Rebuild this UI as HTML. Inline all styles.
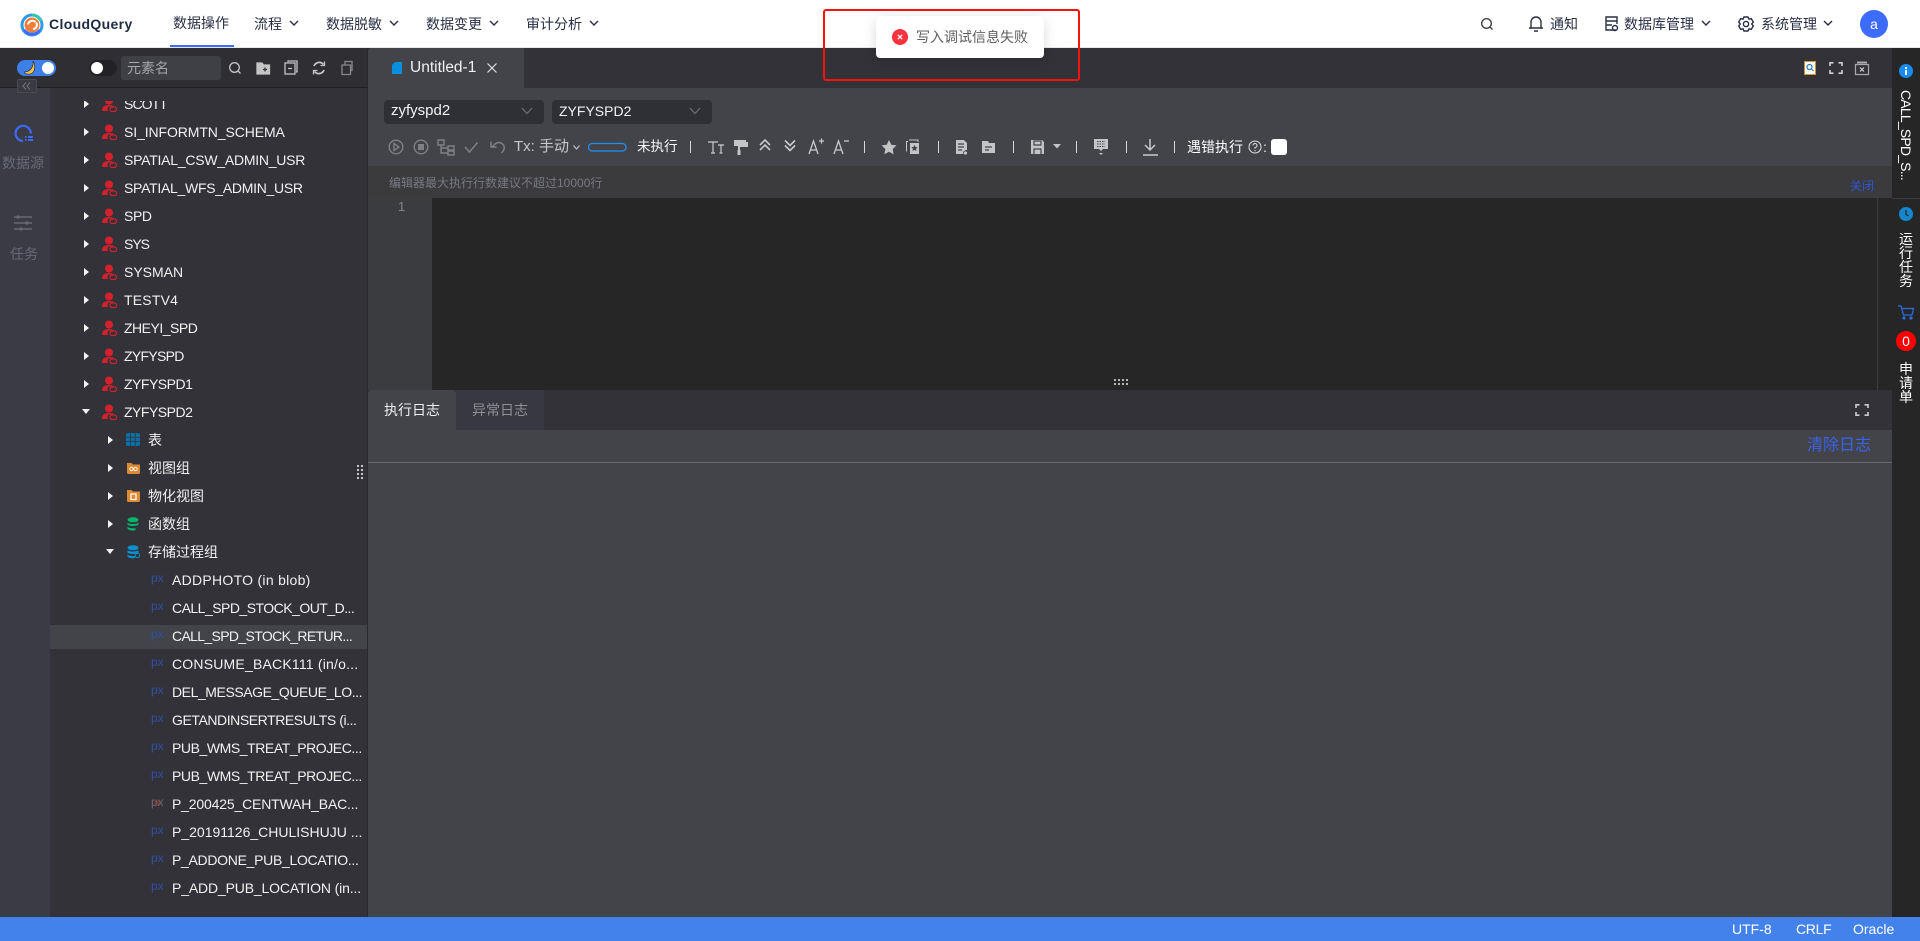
<!DOCTYPE html>
<html lang="zh">
<head>
<meta charset="utf-8">
<title>CloudQuery</title>
<style>
*{box-sizing:border-box}
html,body{margin:0;padding:0;width:1920px;height:941px;overflow:hidden;background:#323238;font-family:"Liberation Sans","Noto Sans CJK SC",sans-serif;}
.a{position:absolute}
.t{position:absolute;white-space:nowrap;line-height:20px;font-size:14px}
svg{position:absolute;overflow:visible}
.nav{color:#2a2f45;top:14px}
.r{position:absolute;white-space:nowrap;font-size:14px;line-height:20px;color:#f2f2f2}
.tri{position:absolute;width:0;height:0;border-top:4px solid transparent;border-bottom:4px solid transparent;border-left:5px solid #f2f2f2}
.trid{position:absolute;width:0;height:0;border-left:4.5px solid transparent;border-right:4.5px solid transparent;border-top:5px solid #f2f2f2}
.px{position:absolute;font-size:12px;line-height:14px;color:#2f50a8;letter-spacing:0}
.sep{position:absolute;top:141px;width:1px;height:12px;background:#d8d8d8}
.ti{fill:none;stroke:#7f8086;stroke-width:1.4}
.tw{fill:none;stroke:#c9c9cb;stroke-width:1.5}
.tf{fill:#c4c4c6}
</style>
</head>
<body>
<!-- header -->
<div class="a" style="left:0;top:0;width:1920px;height:48px;background:#fff;border-bottom:1px solid #e8e8e8"></div>
<svg style="left:21px;top:13px" width="22" height="24" viewBox="0 0 22 24">
<circle cx="11" cy="12" r="10" fill="none" stroke="#2d9be8" stroke-width="3"/>
<path d="M3 17A10 10 0 0 0 19 17" fill="none" stroke="#3d6bff" stroke-width="3"/>
<path d="M11 2A10 10 0 0 1 20 8" fill="none" stroke="#35c5b0" stroke-width="3"/>
<circle cx="11" cy="12" r="7.5" fill="#ee7d3a"/>
<path d="M7 11.5a4.5 4.5 0 0 1 7.5-2.5M15 9.5a4 4 0 0 1-3 6.5" fill="none" stroke="#fff" stroke-width="2"/>
</svg>
<div class="t" style="left:49px;top:14px;font-size:14px;font-weight:700;color:#1f2a44;letter-spacing:.35px">CloudQuery</div>
<div class="t nav" style="left:173px;top:12.500px;">数据操作</div>
<div class="a" style="left:170px;top:45px;width:64px;height:2px;background:#3d6bff"></div>
<div class="t nav" style="left:254px">流程</div>
<div class="t nav" style="left:326px">数据脱敏</div>
<div class="t nav" style="left:426px">数据变更</div>
<div class="t nav" style="left:526px">审计分析</div>
<svg style="left:0;top:0" width="1920" height="48" fill="none" stroke="#2a2f45" stroke-width="1.4">
<path d="M290 21l4 4 4-4M390 21l4 4 4-4M490 21l4 4 4-4M590 21l4 4 4-4M1702 21l4 4 4-4M1824 21l4 4 4-4"/>
<circle cx="1486.5" cy="23.5" r="4.8" stroke="#444"/><path d="M1490 27l2.5 2.5" stroke="#444"/>
<path d="M1531 28v-6a5 5 0 0 1 10 0v6zM1529 28h14M1534 31h4"/>
<path d="M1616 30h-10v-13h11v7M1606 21h11M1606 25h6"/><circle cx="1615" cy="28" r="2.5"/>
<path d="M1744 17h4l1 2.2 2.3-.5 2 3.4-1.6 1.9 1.6 1.9-2 3.4-2.3-.5-1 2.2h-4l-1-2.2-2.3.5-2-3.4 1.6-1.9-1.6-1.9 2-3.4 2.3.5z"/><circle cx="1746" cy="24" r="2.6"/>
</svg>
<div class="t nav" style="left:1550px">通知</div>
<div class="t nav" style="left:1624px">数据库管理</div>
<div class="t nav" style="left:1761px">系统管理</div>
<div class="a" style="left:1860px;top:10px;width:28px;height:28px;border-radius:50%;background:#3d6bff;color:#fff;font-size:14px;line-height:28px;text-align:center">a</div>

<!-- left columns -->
<div class="a" style="left:0;top:87px;width:50px;height:830px;background:#3a3b45"></div>
<div class="a" style="left:50px;top:87px;width:318px;height:830px;background:#323238"></div>
<div class="a" style="left:0;top:48px;width:368px;height:40px;background:#2e2e33;border-bottom:1px solid #1f1f22"></div>
<div class="a" style="left:367px;top:48px;width:1px;height:869px;background:#2a2a2e"></div>
<div class="a" style="left:17px;top:60px;width:39px;height:16px;border-radius:8px;background:#3f7fe8"></div>
<svg style="left:22px;top:60px" width="16" height="16" viewBox="0 0 16 16"><path d="M11 1C12 7 8 12 2 12c2 3 8 3 10-1 1-3 1-7-1-10z" fill="#f4c24a" stroke="#222" stroke-width=".6"/></svg>
<div class="a" style="left:42px;top:62px;width:12px;height:12px;border-radius:50%;background:#fff"></div>
<div class="a" style="left:17px;top:79px;width:20px;height:14px;border:1px solid #4a4b52;background:#3a3b42;border-radius:2px"></div>
<svg style="left:21px;top:82px" width="12" height="8" fill="none" stroke="#70717a" stroke-width="1"><path d="M5 0.5L2 4l3 3.5M9 .5L6 4l3 3.5"/></svg>
<div class="a" style="left:89px;top:60px;width:28px;height:16px;border-radius:8px;background:#222226"></div>
<div class="a" style="left:91px;top:62px;width:12px;height:12px;border-radius:50%;background:#fff"></div>
<div class="a" style="left:121px;top:56px;width:100px;height:24px;border-radius:3px;background:#3f4046"></div>
<div class="t" style="left:127px;top:58px;color:#a5a6ab">元素名</div>
<svg style="left:0;top:48px" width="368" height="40" fill="none" stroke="#c4c4c6" stroke-width="1.3">
<circle cx="234.5" cy="19.5" r="4.8"/><path d="M238 23l2.5 2.5"/>
<path d="M257 15h5l1.5 2h6v9h-12.500z" fill="#c4c4c6"/><path d="M263 21.500h4M265 19.500v4" stroke="#333"/>
<rect x="285" y="15" width="10" height="11"/><path d="M288 14v-1h9v11h-1M288 20.500h4"/>
<path d="M314 18a5.500 5.500 0 0 1 9.500-1.500M324 22a5.500 5.500 0 0 1-9.500 1.500" stroke-width="1.800"/><path d="M324.500 13.500v4h-4M313.500 26.500v-4h4" stroke-width="1.300"/>
<rect x="342" y="17" width="8.500" height="9.500" stroke="#888"/><path d="M345 17v-3.500h7v9h-2" stroke="#888"/>
</svg>

<!-- left nav -->
<svg style="left:14px;top:124px" width="20" height="20" viewBox="0 0 20 20" fill="none" stroke="#3d6bff" stroke-width="2.200">
<path d="M9 17A7.600 7.600 0 1 1 16.800 9.500"/><path d="M11 13h1.500M14 13h5M11 16h1.500M14 16h5" stroke-width="2"/>
</svg>
<div class="t" style="left:2px;top:153px;color:#686a78">数据源</div>
<svg style="left:13px;top:215px" width="20" height="16" fill="none" stroke="#676974" stroke-width="1.600"><path d="M1 2h18M1 8h18M1 14h18"/><path d="M5 .5v3M14 6.500v3M8 12.500v3" stroke-width="2.600"/></svg>
<div class="t" style="left:10px;top:244px;color:#686a78">任务</div>

<!-- tree -->
<div class="a" style="left:50px;top:101px;width:317px;height:816px;overflow:hidden">
<div class="a" style="left:-50px;top:-102px;width:368px;height:941px">
<div class="a" style="left:50px;top:626px;width:318px;height:24px;background:#434449"></div>

<div class="tri" style="left:84px;top:101px"></div><svg style="left:101px;top:97px" width="16" height="16"><use href="#u"/></svg><div class="r" style="left:124px;top:95px;letter-spacing:-.9px">SCOTT</div>
<div class="tri" style="left:84px;top:129px"></div><svg style="left:101px;top:125px" width="16" height="16"><use href="#u"/></svg><div class="r" style="left:124px;top:123px;letter-spacing:-.1px">SI_INFORMTN_SCHEMA</div>
<div class="tri" style="left:84px;top:157px"></div><svg style="left:101px;top:153px" width="16" height="16"><use href="#u"/></svg><div class="r" style="left:124px;top:151px;letter-spacing:-.24px">SPATIAL_CSW_ADMIN_USR</div>
<div class="tri" style="left:84px;top:185px"></div><svg style="left:101px;top:181px" width="16" height="16"><use href="#u"/></svg><div class="r" style="left:124px;top:179px;letter-spacing:-.28px">SPATIAL_WFS_ADMIN_USR</div>
<div class="tri" style="left:84px;top:213px"></div><svg style="left:101px;top:209px" width="16" height="16"><use href="#u"/></svg><div class="r" style="left:124px;top:207px;letter-spacing:-.4px">SPD</div>
<div class="tri" style="left:84px;top:241px"></div><svg style="left:101px;top:237px" width="16" height="16"><use href="#u"/></svg><div class="r" style="left:124px;top:235px;letter-spacing:-1px">SYS</div>
<div class="tri" style="left:84px;top:269px"></div><svg style="left:101px;top:265px" width="16" height="16"><use href="#u"/></svg><div class="r" style="left:124px;top:263px">SYSMAN</div>
<div class="tri" style="left:84px;top:297px"></div><svg style="left:101px;top:293px" width="16" height="16"><use href="#u"/></svg><div class="r" style="left:124px;top:291px;letter-spacing:.2px">TESTV4</div>
<div class="tri" style="left:84px;top:325px"></div><svg style="left:101px;top:321px" width="16" height="16"><use href="#u"/></svg><div class="r" style="left:124px;top:319px;letter-spacing:-.5px">ZHEYI_SPD</div>
<div class="tri" style="left:84px;top:353px"></div><svg style="left:101px;top:349px" width="16" height="16"><use href="#u"/></svg><div class="r" style="left:124px;top:347px;letter-spacing:-.7px">ZYFYSPD</div>
<div class="tri" style="left:84px;top:381px"></div><svg style="left:101px;top:377px" width="16" height="16"><use href="#u"/></svg><div class="r" style="left:124px;top:375px;letter-spacing:-.5px">ZYFYSPD1</div>
<div class="trid" style="left:81.500px;top:410px"></div><svg style="left:101px;top:405px" width="16" height="16"><use href="#u"/></svg><div class="r" style="left:124px;top:403px;letter-spacing:-.5px">ZYFYSPD2</div>

<div class="tri" style="left:108px;top:437px"></div>
<svg style="left:126px;top:434px" width="14" height="14"><rect width="14" height="13" rx="2" fill="#0b6fa8"/><path d="M0 4.300h14M0 8.600h14M4.600 0v13M9.300 0v13" stroke="#33353b" stroke-width=".8"/></svg>
<div class="r" style="left:148px;top:431px">表</div>
<div class="tri" style="left:108px;top:465px"></div>
<svg style="left:127px;top:462px" width="13" height="13"><path d="M0 2h4.500l1.500 1.500h7v8a1.500 1.500 0 0 1-1.500 1.500h-10A1.500 1.500 0 0 1 0 11.500z" fill="#de8a34"/><circle cx="4.500" cy="8" r="1.700" fill="none" stroke="#fff" stroke-width=".9"/><circle cx="8.500" cy="8" r="1.700" fill="none" stroke="#fff" stroke-width=".9"/></svg>
<div class="r" style="left:148px;top:459px">视图组</div>
<div class="tri" style="left:108px;top:493px"></div>
<svg style="left:127px;top:490px" width="13" height="13"><path d="M0 1h4.500l1.500 1.500h7v9a1.500 1.500 0 0 1-1.500 1.500h-10A1.500 1.500 0 0 1 0 11.500z" fill="#de8a34"/><rect x="4" y="5" width="5" height="5.500" fill="none" stroke="#fff" stroke-width="1.200"/></svg>
<div class="r" style="left:148px;top:487px">物化视图</div>
<div class="tri" style="left:108px;top:521px"></div>
<svg style="left:127px;top:518px" width="12" height="14"><ellipse cx="6" cy="2.800" rx="5.500" ry="2.500" fill="#06b36a"/><path d="M.5 5.500c1 2 10 2 11 0v2c-1 2-10 2-11 0zM.5 9.500c1 2 7 2 8 1.500v2c-2 1-7 .5-8-1.500z" fill="#06b36a"/></svg>
<div class="r" style="left:148px;top:515px">函数组</div>
<div class="trid" style="left:105.500px;top:550px"></div>
<svg style="left:127px;top:546px" width="13" height="14"><ellipse cx="6" cy="2.800" rx="5.500" ry="2.500" fill="#0c8fd0"/><path d="M.5 5c1 2 10 2 11 0v2.500c-1 2-10 2-11 0zM.5 9.300c1 2 6 2 7.500 1.500v2.200c-2 .5-6.500.2-7.500-1.500z" fill="#0c8fd0"/><circle cx="10.500" cy="10.500" r="2.200" fill="none" stroke="#0c8fd0" stroke-width="1"/></svg>
<div class="r" style="left:148px;top:543px">存储过程组</div>

<div class="px" style="left:151px;top:572px">px</div><div class="r" style="left:172px;top:571px;letter-spacing:.28px">ADDPHOTO (in blob)</div>
<div class="px" style="left:151px;top:600px">px</div><div class="r" style="left:172px;top:599px;letter-spacing:-.52px">CALL_SPD_STOCK_OUT_D...</div>
<div class="px" style="left:151px;top:628px">px</div><div class="r" style="left:172px;top:627px;letter-spacing:-.65px">CALL_SPD_STOCK_RETUR...</div>
<div class="px" style="left:151px;top:656px">px</div><div class="r" style="left:172px;top:655px;letter-spacing:.2px">CONSUME_BACK111 (in/o...</div>
<div class="px" style="left:151px;top:684px">px</div><div class="r" style="left:172px;top:683px;letter-spacing:-.43px">DEL_MESSAGE_QUEUE_LO...</div>
<div class="px" style="left:151px;top:712px">px</div><div class="r" style="left:172px;top:711px;letter-spacing:-.43px">GETANDINSERTRESULTS (i...</div>
<div class="px" style="left:151px;top:740px">px</div><div class="r" style="left:172px;top:739px;letter-spacing:-.43px">PUB_WMS_TREAT_PROJEC...</div>
<div class="px" style="left:151px;top:768px">px</div><div class="r" style="left:172px;top:767px;letter-spacing:-.43px">PUB_WMS_TREAT_PROJEC...</div>
<div class="px" style="left:151px;top:796px;color:#6a6a6e">px</div><svg style="left:152px;top:799px" width="10" height="10" fill="none" stroke="#a03a3a" stroke-width=".7"><circle cx="5" cy="5" r="2.200"/><path d="M3.500 3.500l3 3M6.500 3.500l-3 3"/></svg><div class="r" style="left:172px;top:795px;letter-spacing:-.17px">P_200425_CENTWAH_BAC...</div>
<div class="px" style="left:151px;top:824px">px</div><div class="r" style="left:172px;top:823px">P_20191126_CHULISHUJU ...</div>
<div class="px" style="left:151px;top:852px">px</div><div class="r" style="left:172px;top:851px;letter-spacing:-.3px">P_ADDONE_PUB_LOCATIO...</div>
<div class="px" style="left:151px;top:880px">px</div><div class="r" style="left:172px;top:879px;letter-spacing:-.15px">P_ADD_PUB_LOCATION (in...</div>
</div>
</div>
<svg style="left:0;top:0" width="0" height="0"><defs><g id="u"><circle cx="8" cy="4.500" r="4" fill="#d3212d"/><path d="M1 15c0-4 2-6 7-6 3 0 4 .5 5 1.500H9.500A2.500 2.500 0 0 0 7.500 15z" fill="#d3212d"/><rect x="9" y="11" width="6.500" height="4.500" rx="2" fill="none" stroke="#d3212d" stroke-width="1.200"/></g></defs></svg>
<svg style="left:357px;top:465px" width="8" height="14" fill="#c8c8c8"><rect x="0" y="0" width="2" height="2"/><rect x="4" y="0" width="2" height="2"/><rect x="0" y="4" width="2" height="2"/><rect x="4" y="4" width="2" height="2"/><rect x="0" y="8" width="2" height="2"/><rect x="4" y="8" width="2" height="2"/><rect x="0" y="12" width="2" height="2"/><rect x="4" y="12" width="2" height="2"/></svg>

<!-- main: tab bar -->
<div class="a" style="left:368px;top:48px;width:1524px;height:40px;background:#323238"></div>
<div class="a" style="left:368px;top:48px;width:156px;height:40px;background:#43444a;border-top-left-radius:4px"></div>
<svg style="left:392px;top:62px" width="10" height="12"><path d="M3 0h7v12H0V3z" fill="#0a8ee0"/></svg>
<div class="t" style="left:410px;top:58px;color:#f0f0f0;font-size:15.500px">Untitled-1</div>
<svg style="left:487px;top:63px" width="10" height="10" stroke="#e0e0e0" stroke-width="1.200"><path d="M.5.500l9 9M9.500.500l-9 9"/></svg>
<svg style="left:1804px;top:61px" width="12" height="14"><path d="M.5.500h11v13H.500z" fill="#f8f8f8" stroke="#d0942c"/><circle cx="5.500" cy="6" r="2.500" fill="none" stroke="#2d7fb8" stroke-width="1.200"/><path d="M7.500 8l2 2" stroke="#2d7fb8"/></svg>
<svg style="left:1830px;top:62px" width="12" height="12" fill="none" stroke="#cfcfd1" stroke-width="1.600"><path d="M0 4V.8h3.500M8.500.8H12V4M12 8v3.200H8.500M3.500 11.200H0V8"/></svg>
<svg style="left:1855px;top:61px" width="14" height="14" fill="none" stroke="#a9a9ac" stroke-width="1.200"><path d="M.5 3.500h13v10H.5z"/><path d="M2 1.500h10" stroke-width="2"/><path d="M5 6.500l4 4M9 6.500l-4 4" stroke="#d0d0d0"/></svg>

<!-- toolbar region -->
<div class="a" style="left:368px;top:88px;width:1524px;height:78px;background:#43444a"></div>
<div class="a" style="left:384px;top:100px;width:160px;height:24px;border-radius:4px;background:#2f3036"></div>
<div class="a" style="left:552px;top:100px;width:160px;height:24px;border-radius:4px;background:#2f3036"></div>
<div class="t" style="left:391px;top:101px;color:#f2f2f2;font-size:15px">zyfyspd2</div>
<div class="t" style="left:559px;top:101px;color:#f2f2f2;font-size:14px">ZYFYSPD2</div>
<svg style="left:0;top:0" width="1300" height="170" fill="none" stroke="#6f7076" stroke-width="1.200">
<path d="M522 108l5 5.500 5-5.500M690 108l5 5.500 5-5.500"/>
<g class="ti"><circle cx="396" cy="147" r="6.800"/><path d="M394 143.500l5 3.500-5 3.500z"/><circle cx="421" cy="147" r="6.800"/><rect x="418" y="144" width="6" height="6" fill="#7f8086" stroke="none"/>
<path d="M438 140h6v5h-6zM448 146h6v4h-6zM448 151h6v4h-6zM441 145v8h7M441 148h7"/>
<path d="M465 147l4.500 5 8-9.500" stroke-width="1.500"/>
<path d="M501.500 153c3-3 4-6 1-9-2-2-5-2-7.500 0l-3 3M491 141.500v5.500h5.500" stroke-width="1.500"/></g>
<path d="M573.500 145.500l3 3.500 3-3.500" stroke="#c0c0c2"/>
<rect x="588.500" y="143.500" width="37.500" height="7.500" rx="3.700" stroke="#1f8ff0" stroke-width="1.300"/>
<g class="tw">
<path d="M708 142h10M713 142v11M711 153h4M718 145h6M721 145v8M719.500 153h3" stroke-width="1.200"/>
<path d="M760 145l5-5 5 5M760 150l5-5 5 5M785 140.500l5 5 5-5M785 145.500l5 5 5-5" stroke-width="1.600"/>
<path d="M809 154l4.500-13 4.500 13M810.500 150h6M819 141h5M821.500 138.500v5M834 154l4.500-13 4.500 13M835.500 150h6M844 141h5" stroke-width="1.300"/>
<path d="M1150 139v10M1145 145l5 5 5-5M1143 155h15" stroke-width="1.500"/>
</g>
<g stroke="none" class="tf">
<path d="M734 140h12v6h-12zM746 142h2v5h-8v3h-2v-5h8zM737.500 150h3v5h-3z"/>
<path d="M889 140l2.300 4.700 5.200.7-3.800 3.600.9 5.200-4.600-2.500-4.600 2.500.9-5.200-3.800-3.600 5.200-.7z"/>
<path d="M956 140h8l3 3v7a3 3 0 0 0-3 4h-8z"/>
<path d="M982 141h6l1 2h6v10h-13z"/>
<path d="M1031 140h11l2 2v12h-13z"/>
<path d="M1053 144h8l-4 4.500z"/>
<path d="M1094 139h14v10h-5l-2 2-2-2h-5z"/>
<path d="M1099 153h4l-2 2z"/>
</g>
<g fill="none" stroke="#c4c4c6">
<path d="M908 141.500h-1.500v10M909 140h9v2" stroke-width="1"/>
</g>
<rect x="910" y="143" width="9" height="11" fill="#c4c4c6" stroke="none"/><path d="M914.500 145l1.100 2 2.100.3-1.600 1.500.4 2.200-2-1.100-2 1.100.4-2.200-1.600-1.500 2.100-.3z" fill="#43444a" stroke="none"/>
<path d="M958 144h6M958 147h6M958 150h4" stroke="#43444a"/><circle cx="965.500" cy="153" r="2" fill="#c4c4c6" stroke="#43444a" stroke-width=".8"/>
<path d="M985 147h7M985 150h4" stroke="#43444a" stroke-width="1.300"/>
<path d="M1034 141h7v4h-7zM1034 154v-5h7v5" stroke="#43444a" stroke-width="1.200"/>
<path d="M1097 141.500h8M1097 144h8M1097 146.500h8" stroke="#43444a" stroke-width="1" stroke-dasharray="1.500 1"/>
</svg>
<div class="t" style="left:514px;top:137px;color:#c6c7ca;font-size:15px">Tx: 手动</div>
<div class="t" style="left:637px;top:137px;color:#f6f6f6;font-size:13.500px">未执行</div>
<div class="sep" style="left:690px"></div><div class="sep" style="left:864px"></div><div class="sep" style="left:938px"></div><div class="sep" style="left:1013px"></div><div class="sep" style="left:1076px"></div><div class="sep" style="left:1126px"></div><div class="sep" style="left:1174px"></div>
<div class="t" style="left:1187px;top:137px;color:#fff;font-size:14px">遇错执行</div>
<svg style="left:1248px;top:140px" width="14" height="14" fill="none" stroke="#e0e0e0" stroke-width="1"><circle cx="7" cy="7" r="6"/><path d="M5 5.500a2 2 0 1 1 2 2v1.200M7 10v1.200"/></svg>
<div class="t" style="left:1263px;top:137px;color:#f0f0f0">:</div>
<div class="a" style="left:1271px;top:139px;width:16px;height:16px;border-radius:3px;background:#fff"></div>

<!-- hint bar -->
<div class="a" style="left:368px;top:166px;width:1524px;height:32px;background:#3b3b3d"></div>
<div class="t" style="left:389px;top:173px;font-size:12px;color:#777983">编辑器最大执行行数建议不超过10000行</div>
<div class="t" style="left:1850px;top:176px;font-size:12px;color:#2f55d4">关闭</div>

<!-- editor -->
<div class="a" style="left:368px;top:198px;width:64px;height:192px;background:#3b3c40"></div>
<div class="a" style="left:432px;top:198px;width:1445px;height:192px;background:#262626"></div>
<div class="a" style="left:1877px;top:198px;width:1px;height:192px;background:#3e3e40"></div>
<div class="a" style="left:1878px;top:198px;width:14px;height:192px;background:#262626"></div>
<div class="t" style="left:398px;top:197px;font-size:13px;color:#85868a">1</div>
<svg style="left:1114px;top:379px" width="16" height="8" fill="#b8b8ba"><path d="M0 0h2v2H0zM4 0h2v2H4zM8 0h2v2H8zM12 0h2v2h-2zM0 4h2v2H0zM4 4h2v2H4zM8 4h2v2H8zM12 4h2v2h-2z"/></svg>

<!-- log panel -->
<div class="a" style="left:368px;top:390px;width:1524px;height:40px;background:#323238"></div>
<div class="a" style="left:368px;top:390px;width:88px;height:40px;background:#43444a;border-top-left-radius:4px;border-top-right-radius:4px"></div>
<div class="a" style="left:456px;top:390px;width:88px;height:40px;background:#383842"></div>
<div class="t" style="left:384px;top:400px;color:#f0f0f0">执行日志</div>
<div class="t" style="left:472px;top:400px;color:#8f9095">异常日志</div>
<svg style="left:1856px;top:404px" width="12" height="12" fill="none" stroke="#cfcfd1" stroke-width="1.600"><path d="M0 4V.8h3.500M8.500.8H12V4M12 8v3.200H8.500M3.500 11.200H0V8"/></svg>
<div class="a" style="left:368px;top:430px;width:1524px;height:487px;background:#43444a"></div>
<div class="a" style="left:368px;top:462px;width:1524px;height:1px;background:#67686c"></div>
<div class="t" style="left:1807px;top:436px;font-size:16px;color:#3a62ea">清除日志</div>

<!-- right bar -->
<div class="a" style="left:1892px;top:48px;width:28px;height:869px;background:#262626"></div>
<div class="a" style="left:1892px;top:198px;width:28px;height:1px;background:#3b3b3d"></div>
<svg style="left:1899px;top:64px" width="14" height="14"><circle cx="7" cy="7" r="7" fill="#1a8cf0"/><rect x="6" y="6" width="2" height="5" fill="#fff"/><rect x="6" y="3" width="2" height="2" fill="#fff"/></svg>
<div class="a" style="left:1896px;top:90px;width:20px;line-height:20px;height:100px;writing-mode:vertical-rl;font-size:14px;letter-spacing:-.8px;color:#fff;white-space:nowrap">CALL_SPD_S...</div>
<svg style="left:1899px;top:207px" width="14" height="14"><circle cx="7" cy="7" r="7" fill="#1486cc"/><path d="M7 3v4.500l2.500 1.500" stroke="#262626" stroke-width="1.300" fill="none"/></svg>
<div class="a" style="left:1899px;top:232px;width:14px;font-size:14px;line-height:14px;color:#fff;text-align:center">运<br>行<br>任<br>务</div>
<svg style="left:1898px;top:305px" width="16" height="15" fill="none" stroke="#2c6be0" stroke-width="1.300"><path d="M0 1h3l2.500 9H14l1.500-6.500H4"/><circle cx="6" cy="13" r="1" fill="#2c6be0"/><circle cx="13" cy="13" r="1" fill="#2c6be0"/></svg>
<div class="a" style="left:1896px;top:331px;width:20px;height:20px;border-radius:50%;background:#f00;color:#fff;text-align:center;font-size:14px;line-height:20px">0</div>
<div class="a" style="left:1899px;top:362px;width:14px;font-size:14px;line-height:14px;color:#fff;text-align:center">申<br>请<br>单</div>

<!-- status bar -->
<div class="a" style="left:0;top:917px;width:1920px;height:24px;background:#4382ea"></div>
<div class="t" style="left:1732px;top:919px;color:#fff">UTF-8</div>
<div class="t" style="left:1796px;top:919px;color:#fff;letter-spacing:-.3px">CRLF</div>
<div class="t" style="left:1853px;top:919px;color:#fff">Oracle</div>

<!-- toast -->
<div class="a" style="left:876px;top:16px;width:168px;height:42px;background:#fff;border-radius:4px;box-shadow:0 3px 14px rgba(0,0,0,.14)"></div>
<svg style="left:892px;top:29px" width="16" height="16"><circle cx="8" cy="8" r="8" fill="#f5333f"/><path d="M5.800 5.800l4.400 4.400M10.200 5.800l-4.400 4.400" stroke="#fff" stroke-width="1.200"/></svg>
<div class="t" style="left:916px;top:27px;color:#5f5f5f">写入调试信息失败</div>
<div class="a" style="left:823px;top:9px;width:257px;height:72px;border:2.500px solid #f5130d;border-radius:3px"></div>
</body>
</html>
